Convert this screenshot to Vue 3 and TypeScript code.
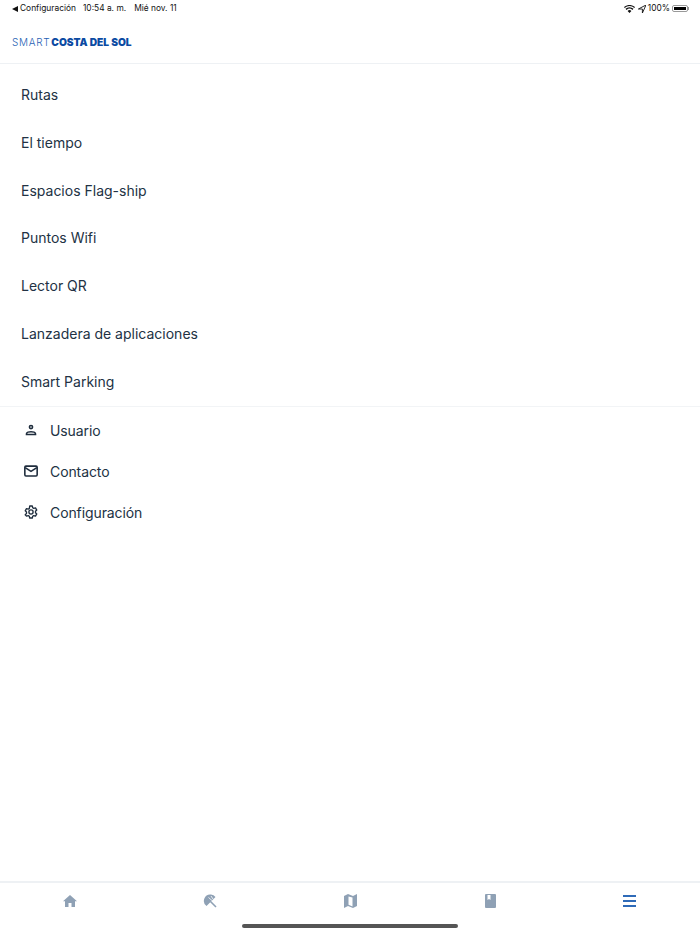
<script setup lang="ts">
const mainLinks = [
  'Rutas',
  'El tiempo',
  'Espacios Flag-ship',
  'Puntos Wifi',
  'Lector QR',
  'Lanzadera de aplicaciones',
  'Smart Parking',
]
</script>

<template>
  <div class="screen">
    <div class="status-bar">
      <div class="status-left">
        <svg class="back-arrow" width="6" height="6" viewBox="0 0 6 6"><path d="M0 3 6 0v6z" fill="#111" /></svg>
        <span>Configuración</span>
        <span class="status-time">10:54 a. m.</span>
        <span class="status-date">Mié nov. 11</span>
      </div>
      <div class="status-right">
        <svg width="11" height="8" viewBox="0 0 11 8">
          <path d="M5.500 8 3.600 5.900a2.800 2.800 0 0 1 3.800 0zM2.600 4.900 1.500 3.700a5.900 5.900 0 0 1 8 0L8.400 4.900a4.300 4.300 0 0 0-5.800 0zM.7 2.900 0 2.100a8.100 8.100 0 0 1 11 0l-.7.8a7 7 0 0 0-9.600 0z" fill="#111" />
        </svg>
        <svg class="location" width="8" height="8" viewBox="0 0 8 8"><path d="M8 0 4.400 8V4H.4z" fill="none" stroke="#111" stroke-width=".9" /></svg>
        <span>100%</span>
        <div class="battery"><div class="battery-fill"></div></div>
        <div class="battery-tip"></div>
      </div>
    </div>

    <header class="top-bar">
      <div class="logo"><span class="logo-light">SMART</span><span class="logo-bold">COSTA DEL SOL</span></div>
    </header>

    <nav class="main-nav">
      <a v-for="link in mainLinks" :key="link" class="main-link">{{ link }}</a>
    </nav>

    <nav class="sub-nav">
      <a class="sub-link">
        <svg class="sub-icon" width="24" height="24" viewBox="0 0 24 24" fill="none" stroke="#1f2d3d" stroke-width="1.900">
          <circle cx="12" cy="8.500" r="1.900" />
          <path d="M6.600 17.300v-.8c0-1.300 3-2.400 5.400-2.400s5.400 1.100 5.400 2.400v.8z" />
        </svg>
        <span>Usuario</span>
      </a>
      <a class="sub-link">
        <svg class="sub-icon" width="24" height="24" viewBox="0 0 24 24" fill="none" stroke="#1f2d3d" stroke-width="1.900">
          <rect x="4.600" y="6.100" width="14.800" height="11.800" rx="1.300" />
          <path d="m5 8 7 4.500L19 8" />
        </svg>
        <span>Contacto</span>
      </a>
      <a class="sub-link">
        <svg class="sub-icon" width="24" height="24" viewBox="0 0 24 24" fill="none" stroke="#1f2d3d" stroke-width="1.800">
          <g transform="translate(1.200 1.200) scale(.9)">
            <circle cx="12" cy="12" r="2.800" />
            <path d="M10.300 4h3.400l.5 2.300 1.500.9 2.300-.7 1.700 2.900-1.700 1.600v2l1.700 1.600-1.700 2.900-2.300-.7-1.500.9-.5 2.300h-3.400l-.5-2.300-1.500-.9-2.300.7L4.300 15.600 6 14v-2L4.300 10.400 6 7.500l2.300.7 1.500-.9z" stroke-linejoin="round" />
          </g>
        </svg>
        <span>Configuración</span>
      </a>
    </nav>

    <div class="spacer"></div>

    <footer class="tab-bar">
      <div class="tabs">
        <div class="tab">
          <svg width="14" height="12" viewBox="0 0 14 12"><path d="M7 0 0 6.200h2V12h3.500V8h3v4H12V6.200h2z" fill="#8fa1b5" /></svg>
        </div>
        <div class="tab">
          <svg width="14" height="14" viewBox="0 0 14 14">
            <path d="M8 .5A6 6 0 0 1 12.500 3L3.500 12A6.400 6.400 0 0 1 8 .5z" fill="#8fa1b5" />
            <path d="m7.500 7.500 5.500 5.500" stroke="#8fa1b5" stroke-width="1.600" />
            <path d="m5.500 3.500 3.500 3M8 2l2 3" stroke="#fff" stroke-width=".8" />
          </svg>
        </div>
        <div class="tab">
          <svg width="13" height="14" viewBox="0 0 13 14"><path d="M0 2 4 0l5 2 4-2v12l-4 2-5-2-4 2zM4.500 2.500v8.300l4 1.700V3.500z" fill="#8fa1b5" fill-rule="evenodd" /></svg>
        </div>
        <div class="tab">
          <svg width="11" height="14" viewBox="0 0 11 14"><path d="M1 0h9a1 1 0 0 1 1 1v12a1 1 0 0 1-1 1H1a1 1 0 0 1-1-1V1a1 1 0 0 1 1-1zm1.500 1v5L4 5l1.500 1V1z" fill="#8fa1b5" fill-rule="evenodd" /></svg>
        </div>
        <div class="tab">
          <div class="burger"><i></i><i></i><i></i></div>
        </div>
      </div>
      <div class="home-indicator"></div>
    </footer>
  </div>
</template>

<style scoped>
.screen {
  display: flex;
  flex-direction: column;
  height: 934px;
  background: #fff;
  color: #223244;
  font-family: Inter, "Open Sans", sans-serif;
  overflow: hidden;
}

.status-bar {
  display: flex;
  justify-content: space-between;
  height: 17px;
  padding: 0 11px 0 12px;
  font-size: 8.400px;
  line-height: 17px;
  color: #111;
}

.status-left,
.status-right {
  display: flex;
  align-items: center;
}

.back-arrow {
  margin-right: 2px;
}

.status-time {
  margin-left: 7px;
}

.status-date {
  margin-left: 8px;
}

.location {
  margin: 0 2px 0 3px;
}

.status-right span {
  margin-right: 2px;
}

.battery {
  width: 16px;
  height: 7px;
  padding: 1px;
  border: 1px solid #999;
  border-radius: 2px;
  box-sizing: border-box;
}

.battery-fill {
  height: 100%;
  background: #000;
}

.battery-tip {
  width: 1px;
  height: 3px;
  background: #999;
}

.top-bar {
  display: flex;
  align-items: center;
  height: 47px;
  padding-left: 12px;
  padding-top: 4px;
  box-sizing: border-box;
  border-bottom: 1px solid #eef1f4;
}

.logo {
  font-size: 10px;
  white-space: nowrap;
  color: #0b4aa2;
}

.logo-light {
  letter-spacing: .7px;
  font-weight: 300;
  color: #1f5fb5;
  margin-right: 1px;
}

.logo-bold {
  font-weight: 900;
  font-size: 10.200px;
}

.main-nav {
  display: flex;
  flex-direction: column;
  padding-top: 7.200px;
  border-bottom: 1px solid #f2f4f6;
}

.main-link {
  display: flex;
  align-items: center;
  height: 47.800px;
  padding-left: 21px;
  font-size: 14px;
  line-height: 20px;
}

.sub-nav {
  display: flex;
  flex-direction: column;
  padding-top: 3px;
}

.sub-link {
  display: flex;
  align-items: center;
  height: 41px;
  padding-left: 21px;
  font-size: 14px;
  letter-spacing: -.1px;
}

.sub-icon {
  width: 20px;
  height: 20px;
  margin-right: 9px;
}

.spacer {
  flex: 1;
}

.tab-bar {
  flex-shrink: 0;
  height: 53px;
  border-top: 2px solid #eef1f4;
  box-sizing: border-box;
}

.tabs {
  display: grid;
  grid-template-columns: repeat(5, 140px);
  height: 36px;
}

.tab {
  display: flex;
  align-items: center;
  justify-content: center;
}

.burger {
  display: flex;
  flex-direction: column;
  gap: 3px;
  margin-right: 1px;
}

.burger i {
  display: block;
  width: 13px;
  height: 2px;
  background: #2f6bb8;
}

.home-indicator {
  width: 216px;
  height: 4px;
  margin: 5px auto 0;
  border-radius: 2px;
  background: #555;
}
</style>
